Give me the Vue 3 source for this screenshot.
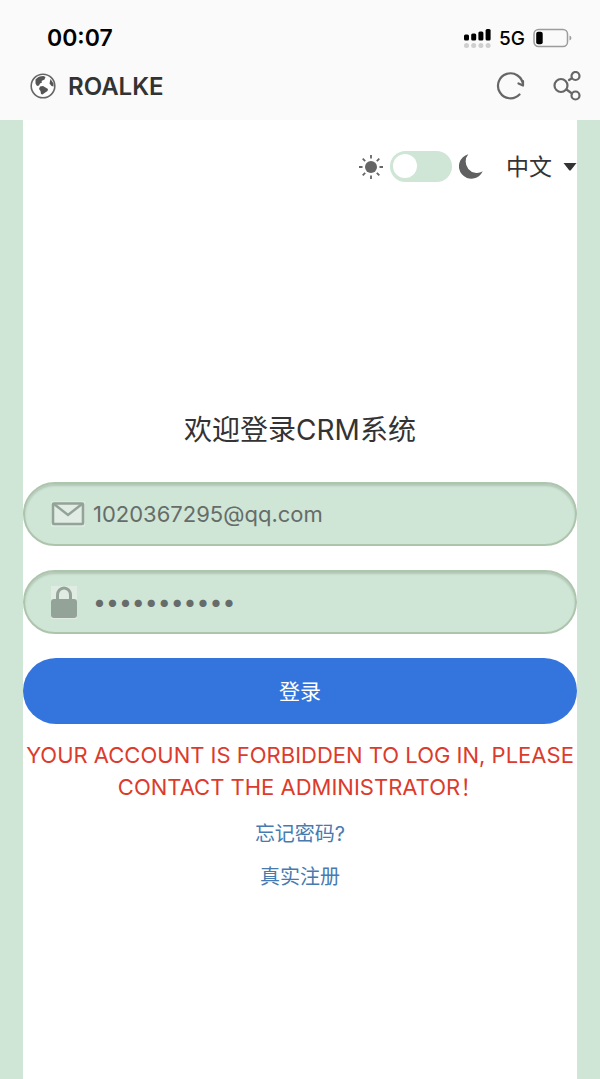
<script setup>
import { ref } from 'vue'

const dark = ref(false)
const language = ref('zh')
const email = ref('1020367295@qq.com')
const password = ref('roalke-crm1')
</script>

<template>
  <div class="screen">
    <header class="chrome">
      <div class="status">
        <span class="time">00:07</span>
        <div class="signals">
          <svg width="27" height="20" viewBox="0 0 27 20" aria-hidden="true">
            <g fill="#000">
              <rect x="0" y="6.500" width="5" height="6" rx="1.500" />
              <rect x="7.200" y="5.500" width="5" height="7" rx="1.500" />
              <rect x="14.400" y="3.500" width="5" height="9" rx="1.500" />
              <rect x="21.600" y="1" width="5" height="11.500" rx="1.500" />
            </g>
            <g fill="#cfcfcf">
              <circle cx="2.500" cy="17.500" r="2.500" />
              <circle cx="9.700" cy="17.500" r="2.500" />
              <circle cx="16.900" cy="17.500" r="2.500" />
              <circle cx="24.100" cy="17.500" r="2.500" />
            </g>
          </svg>
          <span class="network">5G</span>
          <svg width="39" height="20" viewBox="0 0 39 20" aria-hidden="true">
            <rect x="1" y="1.500" width="33.500" height="17" rx="4.500" fill="none" stroke="#9c9c9c" stroke-width="1.500" />
            <rect x="3.200" y="3.800" width="6.500" height="12.500" rx="2" fill="#000" />
            <path d="M36.500 7.500c2.500 1 2.500 4 0 5z" fill="#9c9c9c" />
          </svg>
        </div>
      </div>
      <div class="bar">
        <svg width="26" height="26" viewBox="0 0 26 26" aria-hidden="true">
          <circle cx="13" cy="13" r="11.800" fill="#fff" stroke="#666" stroke-width="1.600" />
          <path d="M5.500 6.500C7.500 4 10 3 13.500 3l2 1-1 2.500-3 1.500 .5 1.500-2 1-1 2-2 .5-1.500-2.500z" fill="#555" />
          <path d="M10 13.500l3-.5 5 3-.5 2-3 2-2 1.500-1.500-.5-.5-3-1.500-2z" fill="#555" />
          <path d="M20.500 6l3 4.500v3l-2-.5-2-2.500z" fill="#555" />
        </svg>
        <span class="site">ROALKE</span>
        <button class="icon-button" type="button" aria-label="刷新">
          <svg width="30" height="30" viewBox="0 0 30 30" fill="none" stroke="#666" stroke-width="2.200" stroke-linecap="round" stroke-linejoin="round">
            <path d="M23.500 23.500A12.500 12.500 0 1 1 27 14M22.500 12.500L27 14.500V10" />
          </svg>
        </button>
        <button class="icon-button" type="button" aria-label="分享">
          <svg width="30" height="30" viewBox="0 0 30 30" fill="none" stroke="#666" stroke-width="2.200" stroke-linecap="round">
            <circle cx="9" cy="14.500" r="6.500" />
            <circle cx="23.500" cy="5" r="4" />
            <circle cx="23.500" cy="24.500" r="4" />
            <path d="M17 9l2.500-1.500M14.500 18.500l5.500 4" />
          </svg>
        </button>
      </div>
    </header>

    <main class="page">
      <div class="tools">
        <svg width="24" height="24" viewBox="0 0 24 24" aria-hidden="true">
          <circle cx="12" cy="12" r="6" fill="#666" />
          <path d="M12 0v3.500M12 20.500v3.500M0 12h3.500M20.500 12h3.500M3.700 3.700L6.200 6.200M17.800 17.800l2.500 2.500M3.700 20.300l2.500-2.500M17.800 6.200l2.500-2.500" stroke="#666" stroke-width="1.800" />
        </svg>
        <input v-model="dark" class="switch" type="checkbox" aria-label="深色模式" />
        <svg width="24" height="26" viewBox="0 0 24 26" aria-hidden="true">
          <path d="M9.300 .3A12.400 12.400 0 1 0 23.700 17.300A11.300 11.300 0 0 1 9.300 .3z" fill="#606060" />
        </svg>
        <div class="language">
          <select v-model="language" aria-label="语言">
            <option value="zh">中文</option>
            <option value="en">English</option>
          </select>
          <svg width="14" height="8" viewBox="0 0 14 8" aria-hidden="true">
            <path d="M.5 0h13L7.800 7.200Q7 8 6.200 7.200z" fill="#333" />
          </svg>
        </div>
      </div>

      <form class="login" @submit.prevent>
        <h1>欢迎登录CRM系统</h1>
        <div class="field">
          <svg width="34" height="26" viewBox="0 0 34 26" aria-hidden="true">
            <rect width="34" height="26" fill="#dbeadf" />
            <rect x="2" y="2.500" width="30" height="20.500" rx="1" fill="#e1ede4" stroke="#94a398" stroke-width="2.600" />
            <path d="M3 3l14 11L31 3" fill="none" stroke="#94a398" stroke-width="2.500" />
          </svg>
          <input v-model="email" type="text" aria-label="邮箱" autocomplete="username" />
        </div>
        <div class="field">
          <svg width="34" height="33" viewBox="0 0 34 33" aria-hidden="true">
            <rect width="26" height="33" fill="#e0ece3" />
            <path d="M6.500 15V9a6.500 7 0 0 1 13 0v6" fill="none" stroke="#94a398" stroke-width="3" />
            <rect y="13" width="26" height="19" rx="3" fill="#94a398" />
          </svg>
          <input v-model="password" class="password" type="password" aria-label="密码" autocomplete="current-password" />
        </div>
        <button class="submit" type="submit">登录</button>
        <p class="error" role="alert">YOUR ACCOUNT IS FORBIDDEN TO LOG IN, PLEASE CONTACT THE ADMINISTRATOR！</p>
        <nav class="links">
          <a href="#forgot">忘记密码?</a>
          <a href="#register">真实注册</a>
        </nav>
      </form>
    </main>
  </div>
</template>

<style>
body {
  background: #cfe5d6;
}
</style>

<style scoped>
* {
  box-sizing: border-box;
}
.screen {
  display: flex;
  flex-direction: column;
  min-height: 100vh;
  background: #cfe5d6;
  color: #333;
  font-family: Inter, "Noto Sans CJK SC", sans-serif;
}
.chrome {
  background: #fafafa;
  padding: 20px 18px 6px 30px;
}
.status {
  display: flex;
  align-items: center;
  justify-content: space-between;
  height: 36px;
  padding: 0 10px 0 17px;
  color: #000;
}
.time {
  font-size: 23px;
  font-weight: 600;
}
.signals {
  display: flex;
  align-items: center;
  gap: 8px;
}
.network {
  font-size: 19px;
  font-weight: 500;
}
.bar {
  display: flex;
  align-items: center;
  height: 58px;
  padding-top: 2px;
}
.site {
  flex: 1;
  margin-left: 12px;
  font-size: 24px;
  font-weight: 600;
}
.icon-button {
  display: flex;
  margin-left: 26px;
  padding: 0;
  border: 0;
  background: none;
}
.page {
  flex: 1;
  margin: 0 23px;
  background: #fff;
}
.tools {
  display: flex;
  align-items: center;
  justify-content: flex-end;
  gap: 7px;
  padding-top: 31px;
}
.switch {
  appearance: none;
  width: 62px;
  height: 31px;
  margin: 0;
  padding: 3px;
  border-radius: 16px;
  background: #cfe5d6;
}
.switch::before {
  content: "";
  display: block;
  width: 24px;
  height: 24px;
  border-radius: 50%;
  background: #fff;
}
.switch:checked::before {
  margin-left: auto;
}
.language {
  display: flex;
  align-items: center;
  margin-left: 16px;
}
.language select {
  appearance: none;
  width: 57px;
  height: 31px;
  padding: 0;
  border: 0;
  background: none;
  color: #333;
  font: 23px Inter, "Noto Sans CJK SC", sans-serif;
}
.login {
  padding-top: 228px;
}
h1 {
  margin: 0 0 32px;
  text-align: center;
  font-size: 28px;
  font-weight: 400;
  line-height: 40px;
}
.field {
  display: flex;
  align-items: center;
  gap: 8px;
  height: 64px;
  margin-bottom: 24px;
  padding: 0 26px;
  border: 2px solid #adc4ad;
  border-radius: 32px;
  background: #cfe5d6;
  box-shadow: inset 0 2px 2px #b3c8b8;
}
.field input {
  flex: 1;
  min-width: 0;
  height: 40px;
  padding: 0;
  border: 0;
  outline: 0;
  background: none;
  color: #666c69;
  font: 22px Inter, sans-serif;
}
.field .password {
  font-size: 23px;
}
.submit {
  display: block;
  width: 100%;
  height: 66px;
  padding: 0 0 2px;
  border: 0;
  border-radius: 33px;
  background: #3474dd;
  color: #fff;
  font: 21px Inter, "Noto Sans CJK SC", sans-serif;
}
.error {
  margin: 15px 0 0;
  color: #dc3b2c;
  text-align: center;
  font-size: 22px;
  line-height: 32px;
}
.links {
  display: flex;
  flex-direction: column;
  align-items: center;
  gap: 15px;
  margin-top: 17px;
}
.links a {
  color: #477bb0;
  font-size: 20px;
  line-height: 28px;
  text-decoration: none;
}
</style>
